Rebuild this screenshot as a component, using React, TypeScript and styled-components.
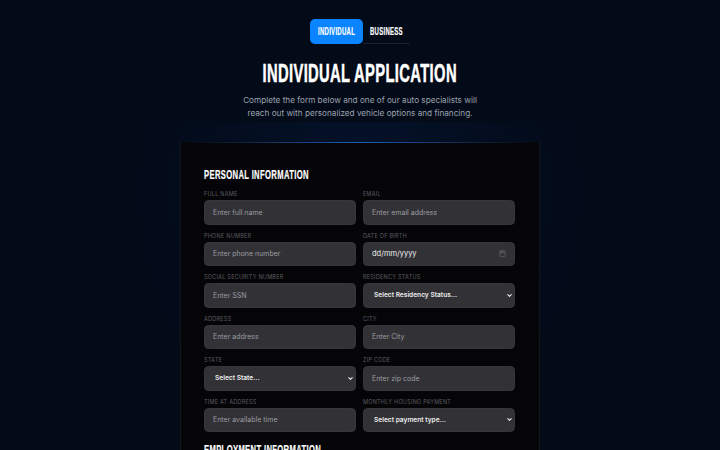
import styled, { createGlobalStyle } from 'styled-components';
import { useState } from 'react';
import { Calendar, ChevronDown } from 'lucide-react';

const GlobalStyle = createGlobalStyle`
  html, body {
    margin: 0;
    height: 450px;
    overflow: hidden;
    background: #030a18;
  }
  * {
    box-sizing: border-box;
  }
`;

const Page = styled.div`
  height: 450px;
  overflow: hidden;
  background: #030a18;
  font-family: 'Inter', 'Noto Sans', sans-serif;
  display: flex;
  flex-direction: column;
  align-items: center;
  padding-top: 19px;
`;

const Tabs = styled.div`
  display: flex;
  width: 100px;
  height: 25px;
`;

const Tab = styled.button<{ $active?: boolean }>`
  display: flex;
  align-items: center;
  border: 0;
  height: 25px;
  padding: 0;
  white-space: nowrap;
  color: #fff;
  ${({ $active }) =>
    $active
      ? `
    width: 53px;
    padding-bottom: 2px;
    justify-content: center;
    border-radius: 5px;
    background: #0a84ff;
  `
      : `
    width: 47px;
    padding: 0 0 1px 7px;
    justify-content: flex-start;
    background: transparent;
    border-bottom: 1px solid #1a2130;
  `}
`;

const TabLabel = styled.span<{ $active?: boolean }>`
  display: inline-block;
  font-family: 'Liberation Sans', sans-serif;
  font-weight: 700;
  font-size: 10.5px;
  letter-spacing: 0.5px;
  text-transform: uppercase;
  -webkit-text-stroke: 0.2px #fff;
  transform: scaleX(0.57);
  transform-origin: ${({ $active }) => ($active ? 'center' : 'left')};
`;

const Title = styled.h1`
  margin: 16px 0 0;
  height: 27px;
  color: #fff;
  font-family: 'Liberation Sans', sans-serif;
  font-weight: 700;
  font-size: 25px;
  line-height: 27px;
  letter-spacing: 0.6px;
  white-space: nowrap;
  text-transform: uppercase;
  -webkit-text-stroke: 0.5px #fff;
  transform: scaleX(0.59);
`;

const Intro = styled.p`
  margin: 7px 0 0;
  width: 250px;
  text-align: center;
  color: #9ca3af;
  font-size: 8.2px;
  line-height: 13px;
`;

const GlowWrap = styled.div`
  position: relative;
  margin-top: 22px;
  width: 360px;
`;

const Glow = styled.div`
  position: absolute;
  left: -50px;
  right: -50px;
  top: -20px;
  height: 340px;
  background: radial-gradient(ellipse at 50% 20%, rgba(10, 90, 200, 0.1), transparent 70%);
`;

const Card = styled.form`
  position: relative;
  width: 360px;
  height: 320px;
  padding: 24px 23px 0;
  background: #050507;
  border: 1px solid #10141c;
  border-top: 0;
  &::before {
    content: '';
    position: absolute;
    left: 0;
    right: 0;
    top: 0;
    height: 1px;
    background: linear-gradient(90deg, transparent, #1f5fb5 50%, transparent);
  }
`;

const SectionTitle = styled.h2`
  margin: 0;
  color: #fff;
  font-family: 'Liberation Sans', sans-serif;
  font-weight: 700;
  font-size: 12.5px;
  line-height: 18px;
  letter-spacing: 0.6px;
  white-space: nowrap;
  text-transform: uppercase;
  -webkit-text-stroke: 0.2px #fff;
  transform: scaleX(0.61);
  transform-origin: left;
`;

const Grid = styled.div`
  display: grid;
  grid-template-columns: 152px 152px;
  column-gap: 7px;
  row-gap: 7px;
  margin-top: 6px;
  margin-bottom: 9px;
`;

const Field = styled.label`
  display: flex;
  flex-direction: column;
  gap: 2px;
`;

const FieldLabel = styled.span`
  color: #5c5d63;
  font-size: 5.5px;
  line-height: 8px;
  letter-spacing: 0.24px;
  text-transform: uppercase;
`;

const ControlWrap = styled.div`
  position: relative;
  height: 24.5px;
`;

const IconSlot = styled.span<{ $color: string }>`
  position: absolute;
  right: 2px;
  top: 0;
  bottom: 0;
  display: flex;
  align-items: center;
  pointer-events: none;
  color: ${({ $color }) => $color};
`;

const DateSlot = styled(IconSlot)`
  right: 9px;
`;

const controlStyles = `
  display: block;
  width: 152px;
  height: 24.5px;
  border: 1px solid #37373b;
  border-radius: 4.5px;
  background: #323236;
  color: #e5e5e5;
  font-family: 'Inter', 'Noto Sans', sans-serif;
  font-size: 7px;
  outline: none;
`;

const Input = styled.input`
  ${controlStyles}
  padding: 0 8px;
  &::placeholder {
    color: #9b9ba1;
    opacity: 1;
  }
`;

const DateInput = styled(Input)`
  font-size: 7.5px;
  color: #f0f0f0;
`;

const Select = styled.select`
  ${controlStyles}
  appearance: none;
  padding: 0 10px;
  font-size: 6.6px;
  font-weight: 600;
  color: #ececec;
`;

type FieldDef = {
  label: string;
  placeholder?: string;
  date?: boolean;
  options?: string;
};

const personalFields: FieldDef[] = [
  { label: 'Full Name', placeholder: 'Enter full name' },
  { label: 'Email', placeholder: 'Enter email address' },
  { label: 'Phone Number', placeholder: 'Enter phone number' },
  { label: 'Date of Birth', date: true },
  { label: 'Social Security Number', placeholder: 'Enter SSN' },
  { label: 'Residency Status', options: 'Select Residency Status...' },
  { label: 'Address', placeholder: 'Enter address' },
  { label: 'City', placeholder: 'Enter City' },
  { label: 'State', options: 'Select State...' },
  { label: 'Zip Code', placeholder: 'Enter zip code' },
  { label: 'Time at Address', placeholder: 'Enter available time' },
  { label: 'Monthly Housing Payment', options: 'Select payment type...' },
];

function Control({ field }: { field: FieldDef }) {
  if (field.options) {
    return (
      <ControlWrap>
        <Select>
          <option>{field.options}</option>
        </Select>
        <IconSlot $color="#ececec">
          <ChevronDown size={7} strokeWidth={3.5} />
        </IconSlot>
      </ControlWrap>
    );
  }
  if (field.date) {
    return (
      <ControlWrap>
        <DateInput defaultValue="dd/mm/yyyy" readOnly />
        <DateSlot $color="#66666b">
          <Calendar size={7} strokeWidth={2.5} />
        </DateSlot>
      </ControlWrap>
    );
  }
  return (
    <ControlWrap>
      <Input placeholder={field.placeholder} />
    </ControlWrap>
  );
}

export default function App() {
  const [tab, setTab] = useState('individual');

  return (
    <Page>
      <GlobalStyle />
      <Tabs>
        <Tab type="button" $active={tab === 'individual'} onClick={() => setTab('individual')}>
          <TabLabel $active={tab === 'individual'}>Individual</TabLabel>
        </Tab>
        <Tab type="button" $active={tab === 'business'} onClick={() => setTab('business')}>
          <TabLabel $active={tab === 'business'}>Business</TabLabel>
        </Tab>
      </Tabs>
      <Title>Individual Application</Title>
      <Intro>
        Complete the form below and one of our auto specialists will reach out with personalized
        vehicle options and financing.
      </Intro>
      <GlowWrap>
        <Glow />
        <Card>
          <SectionTitle>Personal Information</SectionTitle>
          <Grid>
            {personalFields.map((field) => (
              <Field key={field.label}>
                <FieldLabel>{field.label}</FieldLabel>
                <Control field={field} />
              </Field>
            ))}
          </Grid>
          <SectionTitle>Employment Information</SectionTitle>
        </Card>
      </GlowWrap>
    </Page>
  );
}
